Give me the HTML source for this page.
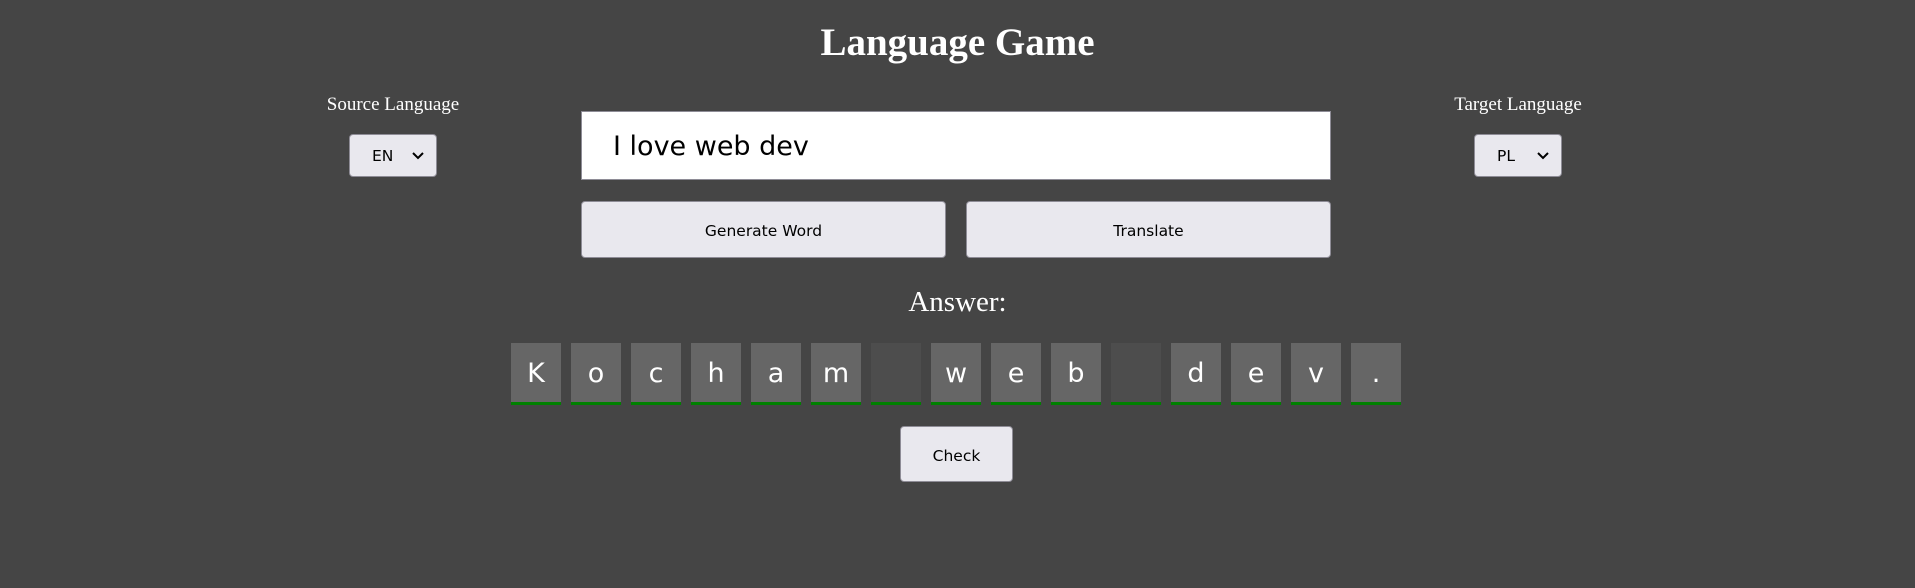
<!DOCTYPE html>
<html><head><meta charset="utf-8"><style>
*{box-sizing:border-box;margin:0;padding:0}
body{width:1915px;height:588px;background:#454545;position:relative;overflow:hidden;font-family:"Liberation Serif",serif;color:#fff}
h1{position:absolute;left:0;width:1915px;text-align:center;top:19px;font-size:39px;font-weight:bold;line-height:48px}
.lbl{position:absolute;width:200px;text-align:center;font-size:19px;top:94px}
.sel{position:absolute;top:134px;width:88px;height:43px;background:#e9e8ee;border:1px solid #8e8c96;border-radius:4px;color:#000;font-family:"DejaVu Sans","Liberation Sans",sans-serif;font-size:15.5px;line-height:43px;padding-left:22px}
.sel svg{position:absolute;right:12px;top:17px}
.inp{position:absolute;left:581px;top:111px;width:750px;height:69px;background:#fff;border:1px solid #8e8c96;color:#000;font-family:"DejaVu Sans","Liberation Sans",sans-serif;font-size:27px;line-height:70px;padding-left:31px}
.btn{position:absolute;background:#e9e8ee;border:1px solid #8e8c96;border-radius:4px;color:#000;font-family:"DejaVu Sans","Liberation Sans",sans-serif;font-size:15.5px;text-align:center}
.ans{position:absolute;left:0;width:1915px;text-align:center;top:286px;font-size:29px}
.t{position:absolute;top:343px;width:50px;height:62px;background:#666;border-bottom:3px solid #008000;font-family:"DejaVu Sans","Liberation Sans",sans-serif;font-size:27px;text-align:center;line-height:62px;color:#fff}
.t.e{background:#4d4d4d}
</style></head><body>
<h1>Language Game</h1>
<div class="lbl" style="left:293px">Source Language</div>
<div class="lbl" style="left:1418px">Target Language</div>
<div class="sel" style="left:349px">EN<svg width="12" height="8" viewBox="0 0 12 8"><path d="M1 1l5 5 5-5" stroke="#000" stroke-width="2" fill="none"/></svg></div>
<div class="sel" style="left:1474px">PL<svg width="12" height="8" viewBox="0 0 12 8"><path d="M1 1l5 5 5-5" stroke="#000" stroke-width="2" fill="none"/></svg></div>
<div class="inp">I love web dev</div>
<div class="btn" style="left:581px;top:201px;width:365px;height:57px;line-height:58px">Generate Word</div>
<div class="btn" style="left:966px;top:201px;width:365px;height:57px;line-height:58px">Translate</div>
<div class="ans">Answer:</div>
<div class="t" style="left:511px">K</div>
<div class="t" style="left:571px">o</div>
<div class="t" style="left:631px">c</div>
<div class="t" style="left:691px">h</div>
<div class="t" style="left:751px">a</div>
<div class="t" style="left:811px">m</div>
<div class="t e" style="left:871px"></div>
<div class="t" style="left:931px">w</div>
<div class="t" style="left:991px">e</div>
<div class="t" style="left:1051px">b</div>
<div class="t e" style="left:1111px"></div>
<div class="t" style="left:1171px">d</div>
<div class="t" style="left:1231px">e</div>
<div class="t" style="left:1291px">v</div>
<div class="t" style="left:1351px">.</div>
<div class="btn" style="left:900px;top:426px;width:113px;height:56px;line-height:58px">Check</div>
</body></html>
